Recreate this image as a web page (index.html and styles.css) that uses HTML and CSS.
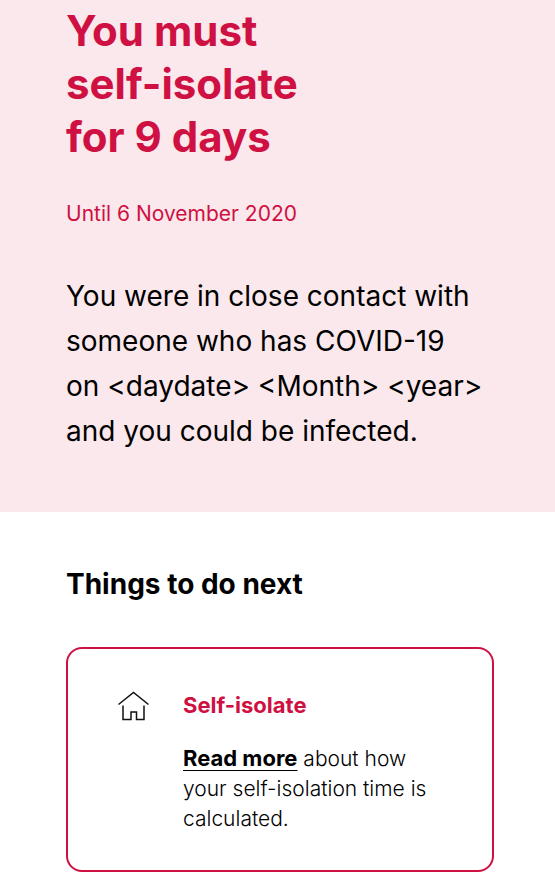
FILE: index.html
```html
<!DOCTYPE html>
<html lang="en">
<head>
  <meta charset="UTF-8" />
  <meta name="viewport" content="width=device-width, initial-scale=1.0"/>
  <title>Self-isolate</title>
  <link rel="stylesheet" href="styles.css">
</head>

<body>
  <header class="alert">
    <h1>You must<br>self-isolate<br>for 9 days</h1>
    <p class="until">Until 6 November 2020</p>
    <p class="message">You were in close contact with<br>someone who has COVID-19<br>on &lt;daydate&gt; &lt;Month&gt; &lt;year&gt;<br>and you could be infected.</p>
  </header>

  <main class="next">
    <h2>Things to do next</h2>

    <section class="card">
      <svg class="icon" viewBox="0 0 32 30" aria-hidden="true">
        <path d="M0.5 13.5 L15.5 1.5 L30.5 13.5 M5 14.5 V28.5 H13 V21 H18.5 V28.5 H26 V14.5" />
      </svg>
      <div class="card-text">
        <h3>Self-isolate</h3>
        <p><a href="#">Read more</a> about how your self-isolation time is calculated.</p>
      </div>
    </section>
  </main>
</body>
</html>
```
FILE: styles.css
```css
* {
  box-sizing: border-box;
}

body {
  margin: 0;
  font-family: Inter, Arial, sans-serif;
  color: #000;
  background: #fff;
}

h1,
h2,
h3,
p {
  margin: 0;
}

/* Pink banner */
.alert {
  padding: 4px 60px 58px 66px;
  background: #fbe8ec;
}

.alert h1 {
  font-size: 42px;
  line-height: 53px;
  font-weight: 700;
  color: #cf1042;
}

.until {
  margin-top: 36px;
  font-size: 21px;
  line-height: 30px;
  color: #cf1042;
}

.message {
  margin-top: 45px;
  font-size: 28px;
  line-height: 45px;
  white-space: nowrap;
}

/* List of actions */
.next {
  padding: 52px 61px 0 66px;
}

.next h2 {
  font-size: 28px;
  line-height: 40px;
  font-weight: 700;
}

.card {
  display: flex;
  gap: 33px;
  margin-top: 43px;
  padding: 40px 50px 36px;
  border: 2px solid #cf1042;
  border-radius: 16px;
}

.icon {
  flex: none;
  width: 32px;
  height: 30px;
  margin-top: 2px;
  fill: none;
  stroke: #111;
  stroke-width: 1.5;
}

.card h3 {
  font-size: 22px;
  line-height: 32px;
  font-weight: 700;
  color: #cf1042;
}

.card p {
  margin-top: 22px;
  font-size: 21px;
  line-height: 30px;
  font-weight: 300;
}

.card a {
  font-size: 22px;
  font-weight: 700;
  color: #000;
  text-decoration-thickness: 1px;
  text-underline-offset: 4px;
}
```
